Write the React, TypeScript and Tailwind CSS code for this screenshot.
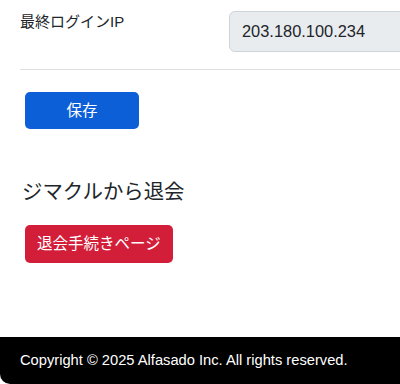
export default function App() {
  return (
    <div
      className="flex min-h-[384px] w-[400px] flex-col overflow-hidden bg-white text-[#212529]"
      style={{ fontFamily: '"Liberation Sans", "Noto Sans CJK JP", sans-serif' }}
    >
      <main className="flex-1 px-5 pt-[10px]">
        <div className="flex">
          <label className="w-[209px] shrink-0 text-[15px] leading-6">最終ログインIP</label>
          <input
            type="text"
            readOnly
            value="203.180.100.234"
            className="mt-px h-[41px] w-[220px] shrink-0 rounded-[6px] border border-[#ced4da] bg-[#e9ecef] px-3 text-[16.4px] text-[#212529] outline-none"
          />
        </div>

        <hr className="-mr-5 mt-[17px] border-t border-[#dedede]" />

        <button
          type="button"
          className="ml-[5px] mt-[22px] h-[37px] w-[114px] rounded-[5px] bg-[#0c5fd6] text-[15.5px] text-white"
        >
          保存
        </button>

        <h2 className="ml-[2px] mt-[49px] text-[20.4px] leading-7">ジマクルから退会</h2>

        <button
          type="button"
          className="ml-[5px] mt-[19px] h-[38px] rounded-[5px] bg-[#d31e3a] px-3 text-[15.5px] text-white"
        >
          退会手続きページ
        </button>
      </main>

      <footer className="mt-[74px] flex h-[47px] items-center rounded-bl-[10px] bg-black px-5 text-[14.7px] text-white">
        Copyright © 2025 Alfasado Inc. All rights reserved.
      </footer>
    </div>
  );
}
